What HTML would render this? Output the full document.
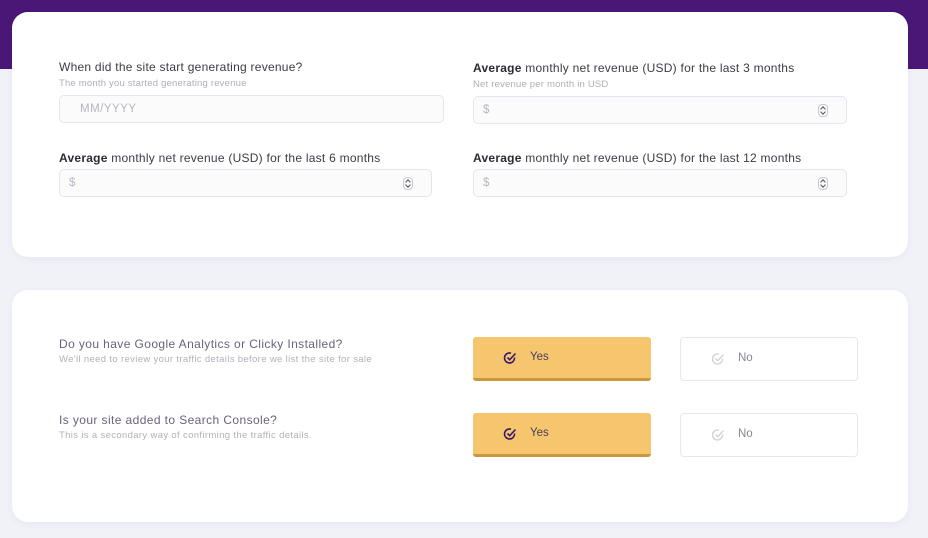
<!DOCTYPE html>
<html><head><meta charset="utf-8"><style>
*{box-sizing:border-box;margin:0;padding:0}
body{width:928px;height:538px;overflow:hidden;background:#f1f1f8;font-family:"Liberation Sans",sans-serif;position:relative}
.band{position:absolute;left:0;top:0;width:928px;height:69px;background:#4a1776}
.card{position:absolute;left:12px;width:896px;background:#fff;border-radius:16px;box-shadow:0 2px 8px rgba(80,60,140,.06)}
.lbl{position:absolute;font-size:12px;letter-spacing:.25px;color:#3d3a48;white-space:nowrap}
.lbl b{color:#2d2a36}
.sub{position:absolute;font-size:9.5px;letter-spacing:.2px;color:#b0adb8;white-space:nowrap}
.inp{position:absolute;height:28px;border:1px solid #e6e4ee;border-radius:5px;background:#fbfbfc;font-size:11.5px;letter-spacing:.5px;color:#b8b6c0;padding-left:9px;line-height:26px}
.spin{position:absolute;right:18px;top:7px;width:10px;height:13px;border:1px solid #c9c7d2;border-radius:4px}
.spin:before{content:"";position:absolute;left:2px;top:2px;width:3px;height:3px;border-left:1px solid #555;border-top:1px solid #555;transform:rotate(45deg)}
.spin:after{content:"";position:absolute;left:2px;top:5px;width:3px;height:3px;border-right:1px solid #555;border-bottom:1px solid #555;transform:rotate(45deg)}
.q{position:absolute;font-size:12px;letter-spacing:.4px;color:#6b627c;white-space:nowrap}
.qs{position:absolute;font-size:9.5px;letter-spacing:.35px;color:#b3afbb;white-space:nowrap}
.yes{position:absolute;width:178px;height:44px;background:#f5c66e;border-radius:3px;border-bottom:3px solid #c8973f;font-size:11.5px;color:#4a3d5e}
.no{position:absolute;width:178px;height:44px;background:#fff;border:1px solid #e8e6ee;border-radius:4px;font-size:11.5px;color:#8a8494}
.yes span,.no span{position:absolute;left:57px;top:14px}
.yes svg,.no svg{position:absolute;left:30px;top:14px}
</style></head><body>
<div class="band"></div>
<div class="card" style="top:12px;height:245px"></div>
<div class="lbl" style="left:59px;top:60px">When did the site start generating revenue?</div>
<div class="sub" style="left:59px;top:78px">The month you started generating revenue</div>
<div class="inp" style="left:59px;top:95px;width:385px;padding-left:20px">MM/YYYY</div>
<div class="lbl" style="left:473px;top:61px"><b>Average</b> monthly net revenue (USD) for the last 3 months</div>
<div class="sub" style="left:473px;top:79px">Net revenue per month in USD</div>
<div class="inp" style="left:473px;top:96px;width:374px">$<i class="spin"></i></div>
<div class="lbl" style="left:59px;top:151px"><b>Average</b> monthly net revenue (USD) for the last 6 months</div>
<div class="inp" style="left:59px;top:169px;width:373px">$<i class="spin"></i></div>
<div class="lbl" style="left:473px;top:151px"><b>Average</b> monthly net revenue (USD) for the last 12 months</div>
<div class="inp" style="left:473px;top:169px;width:374px">$<i class="spin"></i></div>

<div class="card" style="top:290px;height:232px"></div>
<div class="q" style="left:59px;top:337px">Do you have Google Analytics or Clicky Installed?</div>
<div class="qs" style="left:59px;top:354px">We'll need to review your traffic details before we list the site for sale</div>
<div class="q" style="left:59px;top:413px">Is your site added to Search Console?</div>
<div class="qs" style="left:59px;top:430px">This is a secondary way of confirming the traffic details.</div>

<div class="yes" style="left:473px;top:337px"><svg width="14" height="14" viewBox="0 0 14 14"><path d="M11.5 6.5A5 5 0 1 1 8 2.2" fill="none" stroke="#3a1a6a" stroke-width="1.6"/><path d="M4.5 6.5l2.2 2.2L12.5 2.5" fill="none" stroke="#3a1a6a" stroke-width="1.6"/></svg><span>Yes</span></div>
<div class="no" style="left:680px;top:337px"><svg width="14" height="14" viewBox="0 0 14 14"><path d="M11.5 6.5A5 5 0 1 1 8 2.2" fill="none" stroke="#d4d2da" stroke-width="1.4"/><path d="M4.5 6.5l2.2 2.2L12.5 2.5" fill="none" stroke="#d4d2da" stroke-width="1.4"/></svg><span>No</span></div>
<div class="yes" style="left:473px;top:413px"><svg width="14" height="14" viewBox="0 0 14 14"><path d="M11.5 6.5A5 5 0 1 1 8 2.2" fill="none" stroke="#3a1a6a" stroke-width="1.6"/><path d="M4.5 6.5l2.2 2.2L12.5 2.5" fill="none" stroke="#3a1a6a" stroke-width="1.6"/></svg><span>Yes</span></div>
<div class="no" style="left:680px;top:413px"><svg width="14" height="14" viewBox="0 0 14 14"><path d="M11.5 6.5A5 5 0 1 1 8 2.2" fill="none" stroke="#d4d2da" stroke-width="1.4"/><path d="M4.5 6.5l2.2 2.2L12.5 2.5" fill="none" stroke="#d4d2da" stroke-width="1.4"/></svg><span>No</span></div>
</body></html>
